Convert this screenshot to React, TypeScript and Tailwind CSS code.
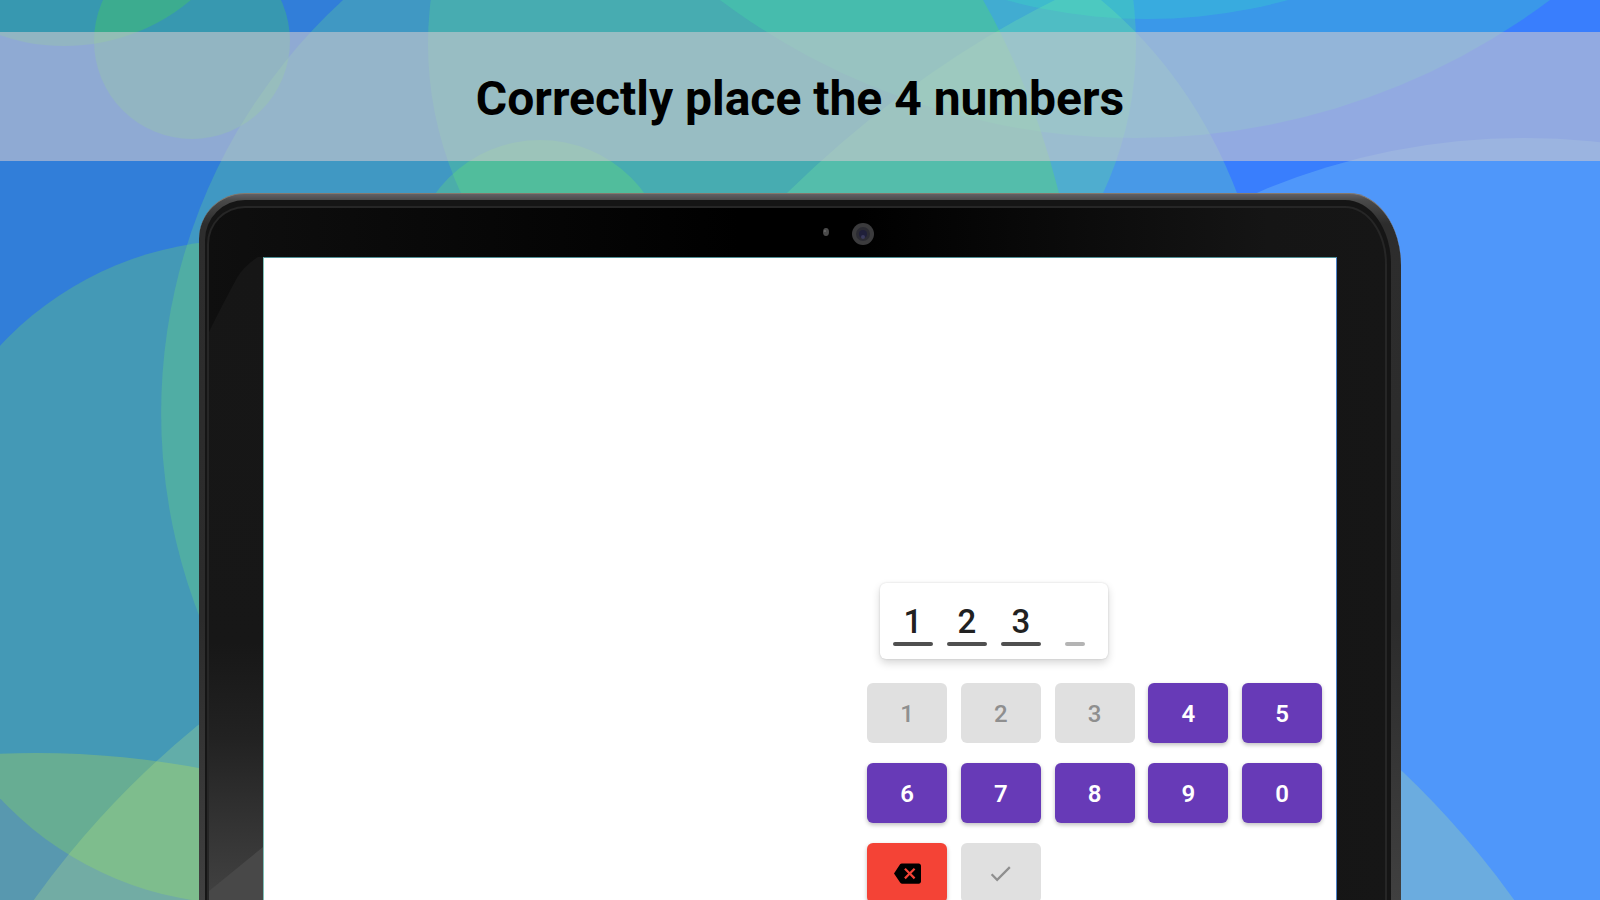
import clsx from "clsx";
import { MdBackspace, MdCheck } from "react-icons/md";

const slots = ["1", "2", "3", ""];
const digits = ["1", "2", "3", "4", "5", "6", "7", "8", "9", "0"];

function Background() {
  return (
    <svg
      className="absolute inset-0 -z-10 h-full w-full"
      viewBox="0 0 1600 900"
      preserveAspectRatio="none"
      aria-hidden="true"
    >
      <rect width="1600" height="900" fill="#397efd" />
      <path d="M0 0 H983 Q1031 84 1059 193 L1059 900 H0 Z" fill="#317ed9" />
      <g fillOpacity="0.21">
        <circle cx="64" cy="-152" r="198" fill="#4efa19" />
        <circle cx="192" cy="41" r="98" fill="#4efa19" />
        <path
          d="M343 0 A560 560 0 0 0 202 623 L600 800 L1059 193 Q1031 84 983 0 Z"
          fill="#7dfa70"
        />
        <circle cx="782" cy="44" r="354" fill="#64fa73" />
        <circle cx="540" cy="269" r="129" fill="#76fe50" />
        <circle cx="1135" cy="-555" r="693" fill="#41fca0" />
        <circle cx="1147" cy="-514" r="533" fill="#32f5be" />
        <path
          d="M787 193 Q913 70 1055 0 L1101 0 Q1192 76 1237 193 L1200 400 L800 400 Z"
          fill="#84fd96"
        />
        <circle cx="1524" cy="817" r="679" fill="#a4f4f0" />
        <circle cx="243" cy="572" r="332" fill="#8cfe32" />
        <circle cx="36" cy="1643" r="890" fill="#ebfa14" />
        <circle cx="774" cy="1431" r="911" fill="#d4f87b" />
      </g>
    </svg>
  );
}

function Camera() {
  return (
    <svg className="h-6 w-14" viewBox="0 0 56 24" aria-hidden="true">
      <ellipse cx="7" cy="10" rx="3" ry="4" fill="#4a4a4a" />
      <circle cx="6" cy="9" r="1" fill="#6a6a6a" />
      <circle cx="44" cy="12" r="11" fill="#3b3b3d" />
      <circle cx="44" cy="12" r="7" fill="#2b2b33" />
      <circle cx="44" cy="12" r="4" fill="#1f1f3a" />
      <circle cx="44" cy="15" r="2" fill="#3a3a5c" />
    </svg>
  );
}

function LeftBezel() {
  return (
    <div className="w-[54px] shrink-0">
      <svg
        className="h-full w-full"
        viewBox="0 0 53 643"
        preserveAspectRatio="none"
        aria-hidden="true"
      >
        <defs>
          <linearGradient id="glare" x1="0" x2="0" y1="0" y2="1">
            <stop offset="0" stopColor="#161616" />
            <stop offset="0.6" stopColor="#171717" />
            <stop offset="0.75" stopColor="#222222" />
            <stop offset="1" stopColor="#424242" />
          </linearGradient>
        </defs>
        <path
          d="M53 0 L48 0 Q34 10 28 20 Q12 50 0 75 V643 H53 Z"
          fill="url(#glare)"
        />
        <path d="M53 590 L0 634 V643 H53 Z" fill="#484848" />
      </svg>
    </div>
  );
}

function Answer() {
  return (
    <div
      role="group"
      aria-label="Answer"
      className="ml-[13px] flex h-[76px] w-fit gap-3.5 rounded-md bg-white px-[13px] pt-[19px] shadow-[0_0_2px_rgba(0,0,0,0.15),0_4px_8px_rgba(0,0,0,0.16)]"
    >
      {slots.map((value, index) => (
        <div key={index} className="flex w-10 flex-col items-center gap-1">
          <span className="h-9 text-[33px] leading-10 font-medium text-[#212121]">
            {value}
          </span>

          <span
            className={clsx(
              "h-1 rounded-full",
              value ? "w-10 bg-[#505050]" : "w-5 bg-[#b4b4b4]"
            )}
          />
        </div>
      ))}
    </div>
  );
}

const keyClass =
  "flex h-[60px] w-20 items-center justify-center rounded-md text-2xl";
const raised = "shadow-[0_2px_4px_rgba(0,0,0,0.25)]";

function Keypad() {
  return (
    <div className="mt-6 grid w-[455px] grid-cols-[repeat(5,auto)] justify-between gap-y-5">
      {digits.map((digit) => {
        const used = slots.includes(digit);

        return (
          <button
            key={digit}
            type="button"
            disabled={used}
            className={clsx(
              keyClass,
              "pt-0.5",
              used
                ? "bg-[#e0e0e0] font-medium text-[#8f8f8f]"
                : "bg-[#673ab7] font-semibold text-white",
              !used && raised
            )}
          >
            {digit}
          </button>
        );
      })}

      <button
        type="button"
        aria-label="Delete"
        className={clsx(keyClass, raised, "bg-[#f44336] text-black")}
      >
        <MdBackspace size={27} />
      </button>

      <button
        type="button"
        aria-label="Confirm"
        disabled
        className={clsx(keyClass, "bg-[#e0e0e0] text-[#8f8f8f]")}
      >
        <MdCheck size={27} />
      </button>
    </div>
  );
}

function Tablet() {
  return (
    <div className="mx-[199px] mt-8 flex min-h-0 flex-1 rounded-tl-[46px] rounded-tr-[52px_72px] border-t border-[#85786c] bg-[linear-gradient(to_bottom,#626064_0,#4a4a4a_6px,#2d2d2d_30px,#2b2b2b_60%,#404040_100%)] pt-1.5 pr-2.5 pl-1.5">
      <div className="flex flex-1 rounded-tl-[40px] rounded-tr-[46px_64px] bg-[#151515] pt-1.5 pr-1 pl-0.5">
        <div className="flex flex-1 flex-col rounded-tl-[38px] rounded-tr-[42px_58px] border-x-2 border-t-2 border-[#262626] bg-[linear-gradient(to_right,#0f0f0f_0,#000_45%,#000_55%,#151515_90%,#161616_100%)]">
          <div className="flex h-[49px] shrink-0 items-center justify-center pt-0.5 pl-[100px]">
            <Camera />
          </div>

          <div className="flex min-h-0 flex-1">
            <LeftBezel />

            <main className="mr-12 flex flex-1 justify-end overflow-hidden border-x border-t border-t-[#4f8f95] border-r-[#4a80c8] border-l-[#7cc0b8] bg-white pt-[325px] pr-3.5">
              <div>
                <Answer />
                <Keypad />
              </div>
            </main>
          </div>
        </div>
      </div>
    </div>
  );
}

export default function App() {
  return (
    <div className="relative isolate flex h-screen flex-col overflow-hidden font-['Roboto',sans-serif]">
      <Background />

      <header className="mt-8 flex h-[129px] shrink-0 items-center justify-center bg-[#cec8ce]/60">
        <h1 className="pt-1 text-5xl font-bold text-black">
          Correctly place the 4 numbers
        </h1>
      </header>

      <Tablet />
    </div>
  );
}
